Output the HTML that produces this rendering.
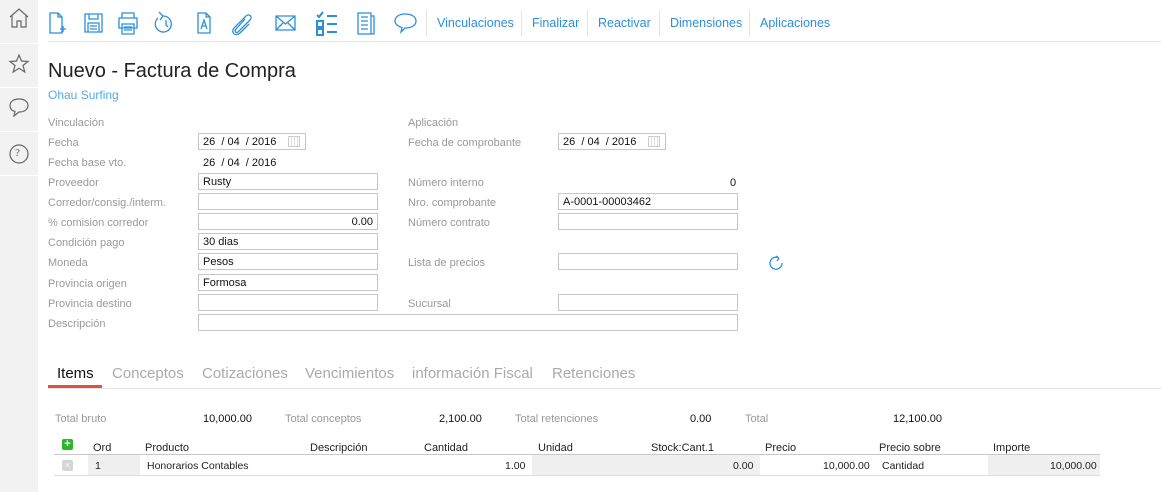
<!DOCTYPE html>
<html><head><meta charset="utf-8"><style>
*{margin:0;padding:0;box-sizing:border-box}
body{width:1161px;height:492px;background:#fff;font-family:"Liberation Sans",sans-serif;position:relative;overflow:hidden}
.a{position:absolute;white-space:nowrap}
.sb{position:absolute;left:0;top:0;width:38px;height:492px;background:#f2f2f2}
.sbl{position:absolute;left:0;width:38px;height:1px;background:#fff}
.lbl{font-size:11px;color:#999}
.in{position:absolute;height:17px;border:1px solid #c8c8c8;font-size:11px;color:#111;padding:0 4px;line-height:16px}
.lk{font-size:12.5px;color:#2b8fdc;top:16px}
.sep{position:absolute;top:10px;width:1px;height:26px;background:#e3e3e3}
.tab{font-size:15px;color:#aaa;top:365px}
.th{font-size:11px;color:#222;top:442px}
.td{font-size:10.5px;color:#222;top:460px}
</style></head><body>
<div class="sb"></div>
<div class="sbl" style="top:43px"></div><div class="sbl" style="top:87px"></div><div class="sbl" style="top:131px"></div><div class="sbl" style="top:175px"></div>
<svg class="a" style="left:0;top:0" width="38" height="180" fill="none" stroke="#666" stroke-width="1.2">
<path d="M10 17 L19 9 L28 17 M12 15 V27 H17 V21 H21 V27 H26 V15"/>
<path d="M19 55 L21.5 61 L28 61.5 L23 65.5 L24.8 72 L19 68.3 L13.2 72 L15 65.5 L10 61.5 L16.5 61 Z"/>
<path d="M19 99 C25 99 28 102 28 105.5 C28 109 25 112 19 112 L14 116 L15 111.5 C11 110.5 10 108 10 105.5 C10 102 13 99 19 99 Z"/>
<circle cx="19" cy="154" r="9"/>
</svg>
<div class="a" style="left:15px;top:147px;font-size:11px;color:#666;font-family:'Liberation Serif',serif">?</div>

<svg class="a" style="left:45px;top:9px" width="380" height="30" fill="none" stroke="#2b8fdc" stroke-width="1.3">
<path d="M5 4 H13 L17 8 V24 H5 Z M13 4 V8 H17"/><path d="M15 20 H21 M18 17 V23"/>
<path d="M40 5 H57 V23 H40 Z M44 5 V10 H53 V5 M43 14 H54 V23 H43 Z M45 17 H52 M45 20 H52"/>
<path d="M77 9 V4 H89 V9 M74 9 H92 V19 H74 Z M77 15 H89 V25 H77 Z M79 18 H87 M79 21 H87"/>
<path d="M118 7 A8 8 0 1 1 113 9 M118 7 L114 3 M118 7 L115 11 M121 11 V16 L123 18"/>
<path d="M153 4 H161 L165 8 V24 H153 Z M161 4 V8 H165 M156 20 L159 11 L162 20 M157 17 H161"/>
<path d="M200 10 L191 20 C189 22 191 25 193 23 L205 11 C208 8 204 4 201 7 L189 19 C185 24 191 28 195 24 L204 15"/>
<path d="M231 7 H250 V21 H231 Z M231 7 L240.5 15 L250 7 M231 21 L238 14 M250 21 L243 14"/>
<path d="M272 12 H278 V18 H272 Z M272 20 H278 V26 H272 Z M282 7 H292 M282 15 H292 M282 23 H292 M272 6 L274 8 L278 3" stroke-width="2"/>
<path d="M313 4 H326 V25 H313 Z M316 8 H323 M316 12 H323 M316 16 H323 M316 20 H323 M326 7 H329 V25 H326"/>
<path d="M360 5 C367 5 371 8 371 12 C371 16 367 19 360 19 L356 23 L357 18.5 C353 17.5 350 15 350 12 C350 8 354 5 360 5 Z"/>
</svg>
<div class="sep" style="left:426px"></div>
<div class="a lk" style="left:437px">Vinculaciones</div>
<div class="sep" style="left:521px"></div>
<div class="a lk" style="left:532px">Finalizar</div>
<div class="sep" style="left:587px"></div>
<div class="a lk" style="left:598px">Reactivar</div>
<div class="sep" style="left:659px"></div>
<div class="a lk" style="left:670px">Dimensiones</div>
<div class="sep" style="left:749px"></div>
<div class="a lk" style="left:760px">Aplicaciones</div>
<div class="a" style="left:48px;top:41px;width:1113px;height:1px;background:#e6e6e6"></div>

<div class="a" style="left:48px;top:60px;font-size:20px;color:#222">Nuevo - Factura de Compra</div>
<div class="a" style="left:48px;top:88px;font-size:12px;color:#58a9e6">Ohau Surfing</div>

<div class="a lbl" style="left:48px;top:117px">Vinculación</div>
<div class="a lbl" style="left:48px;top:137px">Fecha</div>
<div class="a lbl" style="left:48px;top:157px">Fecha base vto.</div>
<div class="a lbl" style="left:48px;top:177px">Proveedor</div>
<div class="a lbl" style="left:48px;top:197px">Corredor/consig./interm.</div>
<div class="a lbl" style="left:48px;top:217px">% comision corredor</div>
<div class="a lbl" style="left:48px;top:237px">Condición pago</div>
<div class="a lbl" style="left:48px;top:257px">Moneda</div>
<div class="a lbl" style="left:48px;top:278px">Provincia origen</div>
<div class="a lbl" style="left:48px;top:298px">Provincia destino</div>
<div class="a lbl" style="left:48px;top:318px">Descripción</div>

<div class="in" style="left:198px;top:133px;width:108px">26 &nbsp;/ 04 &nbsp;/ 2016</div>
<div class="a" style="left:288px;top:136px;width:12px;height:11px;border:1px solid #ccc;background:repeating-linear-gradient(90deg,#fff 0 2px,#ddd 2px 3px)"></div>
<div class="a" style="left:203px;top:157px;font-size:11px;color:#111">26 &nbsp;/ 04 &nbsp;/ 2016</div>
<div class="in" style="left:198px;top:173px;width:180px">Rusty</div>
<div class="in" style="left:198px;top:193px;width:180px"></div>
<div class="in" style="left:198px;top:213px;width:180px;text-align:right">0.00</div>
<div class="in" style="left:198px;top:233px;width:180px">30 dias</div>
<div class="in" style="left:198px;top:253px;width:180px">Pesos</div>
<div class="in" style="left:198px;top:274px;width:180px">Formosa</div>
<div class="in" style="left:198px;top:294px;width:180px"></div>
<div class="in" style="left:198px;top:314px;width:540px"></div>

<div class="a lbl" style="left:408px;top:117px">Aplicación</div>
<div class="a lbl" style="left:408px;top:137px">Fecha de comprobante</div>
<div class="a lbl" style="left:408px;top:177px">Número interno</div>
<div class="a lbl" style="left:408px;top:197px">Nro. comprobante</div>
<div class="a lbl" style="left:408px;top:217px">Número contrato</div>
<div class="a lbl" style="left:408px;top:257px">Lista de precios</div>
<div class="a lbl" style="left:408px;top:298px">Sucursal</div>
<div class="in" style="left:558px;top:133px;width:108px">26 &nbsp;/ 04 &nbsp;/ 2016</div>
<div class="a" style="left:648px;top:136px;width:12px;height:11px;border:1px solid #ccc;background:repeating-linear-gradient(90deg,#fff 0 2px,#ddd 2px 3px)"></div>
<div class="a" style="left:730px;top:177px;font-size:11px;color:#111">0</div>
<div class="in" style="left:558px;top:193px;width:180px">A-0001-00003462</div>
<div class="in" style="left:558px;top:213px;width:180px"></div>
<div class="in" style="left:558px;top:253px;width:180px"></div>
<div class="in" style="left:558px;top:294px;width:180px"></div>
<svg class="a" style="left:768px;top:255px" width="18" height="16" fill="none" stroke="#2b8fdc" stroke-width="1.3"><path d="M14 8 A6 6 0 1 1 11 3 M11 3 L8 1 M11 3 L9 6"/></svg>

<div class="a tab" style="left:57px;color:#111">Items</div>
<div class="a tab" style="left:112px">Conceptos</div>
<div class="a tab" style="left:202px">Cotizaciones</div>
<div class="a tab" style="left:305px">Vencimientos</div>
<div class="a tab" style="left:412px">información Fiscal</div>
<div class="a tab" style="left:552px">Retenciones</div>
<div class="a" style="left:48px;top:388px;width:1113px;height:1px;background:#e3e3e3"></div>
<div class="a" style="left:48px;top:385px;width:54px;height:3px;background:#e0533a"></div>

<div class="a lbl" style="left:55px;top:413px">Total bruto</div>
<div class="a" style="left:203px;top:413px;font-size:11px;color:#111">10,000.00</div>
<div class="a lbl" style="left:285px;top:413px">Total conceptos</div>
<div class="a" style="left:439px;top:413px;font-size:11px;color:#111">2,100.00</div>
<div class="a lbl" style="left:515px;top:413px">Total retenciones</div>
<div class="a" style="left:690px;top:413px;font-size:11px;color:#111">0.00</div>
<div class="a lbl" style="left:745px;top:413px">Total</div>
<div class="a" style="left:893px;top:413px;font-size:11px;color:#111">12,100.00</div>

<div class="a" style="left:62px;top:439px;width:11px;height:11px;background:#2db52d;border-radius:2px;color:#fff;font-size:11px;line-height:10px;text-align:center;font-weight:bold">+</div>
<div class="a th" style="left:93px">Ord</div>
<div class="a th" style="left:145px">Producto</div>
<div class="a th" style="left:310px">Descripción</div>
<div class="a th" style="left:424px">Cantidad</div>
<div class="a th" style="left:538px">Unidad</div>
<div class="a th" style="left:651px">Stock:Cant.1</div>
<div class="a th" style="left:765px">Precio</div>
<div class="a th" style="left:879px">Precio sobre</div>
<div class="a th" style="left:993px">Importe</div>
<div class="a" style="left:54px;top:454px;width:1046px;height:1px;background:#c8c8c8"></div>
<div class="a" style="left:88px;top:455px;width:52px;height:20px;background:#f0f0f0"></div>
<div class="a" style="left:532px;top:455px;width:228px;height:20px;background:#f0f0f0"></div>
<div class="a" style="left:988px;top:455px;width:112px;height:20px;background:#f0f0f0"></div>
<div class="a" style="left:54px;top:475px;width:1046px;height:1px;background:#ddd"></div>
<div class="a" style="left:62px;top:460px;width:11px;height:11px;background:#d5d5d5;border-radius:2px;color:#fff;font-size:9px;line-height:11px;text-align:center">×</div>
<div class="a td" style="left:95px">1</div>
<div class="a td" style="left:147px">Honorarios Contables</div>
<div class="a td" style="left:505px">1.00</div>
<div class="a td" style="left:733px">0.00</div>
<div class="a td" style="left:823px">10,000.00</div>
<div class="a td" style="left:882px">Cantidad</div>
<div class="a td" style="left:1050px">10,000.00</div>
</body></html>
